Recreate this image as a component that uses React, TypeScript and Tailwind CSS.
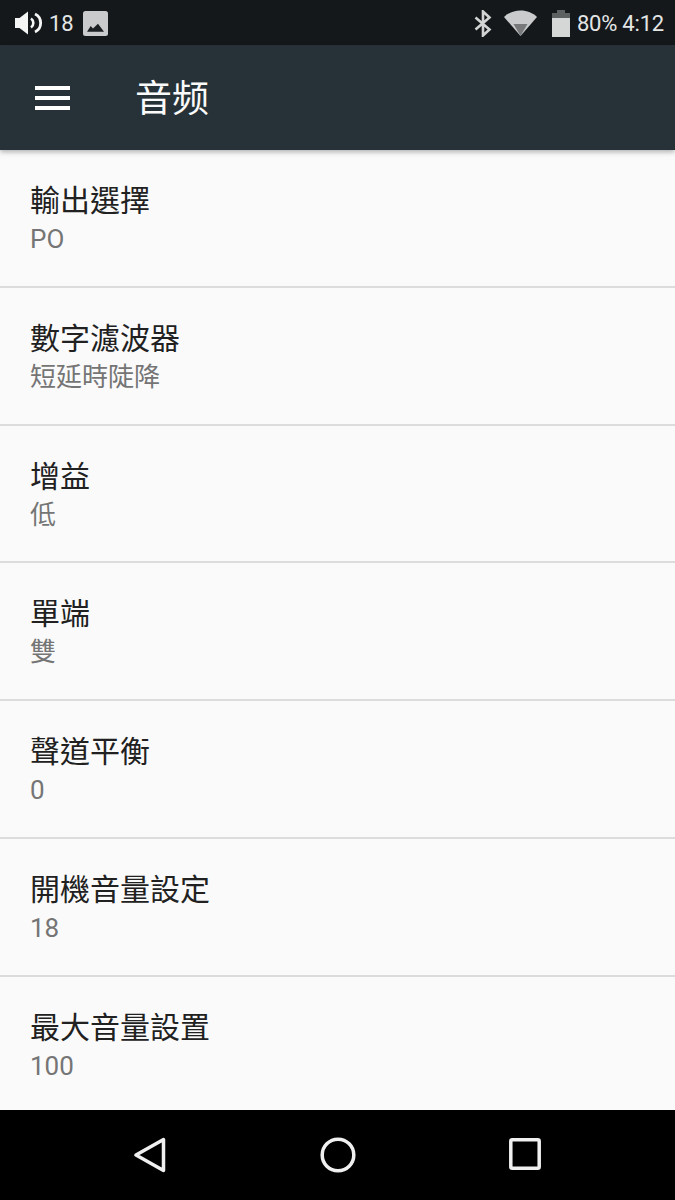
const rows = [
  { title: '輸出選擇', value: 'PO' },
  { title: '數字濾波器', value: '短延時陡降' },
  { title: '增益', value: '低' },
  { title: '單端', value: '雙' },
  { title: '聲道平衡', value: '0' },
  { title: '開機音量設定', value: '18' },
  { title: '最大音量設置', value: '100' },
];

function StatusBar() {
  return (
    <div className="flex h-[45px] items-center justify-between bg-[#14181b] pl-[15px] pr-[11px] text-[#e4e6e6]">
      <div className="flex items-center">
        <svg width="28" height="24" viewBox="0 0 28 24" fill="none">
          <path d="M0 7h4.500L13 .5v23L4.500 17H0z" fill="#f4f5f5" />
          <path d="M16 7.500a5.500 5.500 0 0 1 0 9" stroke="#f4f5f5" strokeWidth="2.600" />
          <path d="M20 3a10 10 0 0 1 0 18" stroke="#f4f5f5" strokeWidth="2.800" />
        </svg>
        <span className="ml-[6px] mt-[2px] text-[22px] leading-none">18</span>
        <svg className="ml-[9px] mt-[1px]" width="25" height="25" viewBox="0 0 25 25">
          <rect width="25" height="25" rx="2.500" fill="#c9cbcc" />
          <path d="M4 20.700l3.700-5.700 2.300 2.500 5-4.800 6 8z" fill="#1c2022" />
        </svg>
      </div>
      <div className="flex items-center">
        <svg className="mt-[1px]" width="18" height="27" viewBox="0 0 18 27" fill="none">
          <path d="M1.500 7.500l14 12-6.500 6V1.500l6.500 6-14 12" stroke="#d2d4d4" strokeWidth="2.600" />
        </svg>
        <svg className="ml-[12px] mt-[1px]" width="33" height="26" viewBox="0 0 33 26">
          <path d="M0 7C4 3 10 .5 16.500.5S29 3 33 7L16.500 26z" fill="#c9cbcc" />
          <path d="M9.500 14h14l-7 12z" fill="#77797a" />
        </svg>
        <svg className="ml-[15px] mt-[1px]" width="18" height="27" viewBox="0 0 18 27">
          <path d="M5 0h8v3h5v5H0V3h5z" fill="#5e6162" />
          <rect y="8" width="18" height="19" fill="#d5d7d7" />
        </svg>
        <span className="ml-[7px] mt-[2px] text-[22px] leading-none tracking-[-0.2px]">80% 4:12</span>
      </div>
    </div>
  );
}

function AppBar() {
  return (
    <div className="relative z-10 flex h-[105px] items-center bg-[#263238] pl-[35px] shadow-[0_2px_5px_rgba(0,0,0,0.3)]">
      <div className="flex w-[35px] flex-col gap-[6px]">
        <div className="h-[4px] bg-white" />
        <div className="h-[4px] bg-white" />
        <div className="h-[4px] bg-white" />
      </div>
      <h1 className="ml-[65px] mt-[3px] text-[37px] leading-none text-[#fafafa]">音频</h1>
    </div>
  );
}

function SettingRow({ title, value, last }: { title: string; value: string; last?: boolean }) {
  return (
    <div className={`h-[137.8px] pl-[30px] pt-[33px] ${last ? '' : 'border-b-2 border-[#dcdcdc]'}`}>
      <div className="text-[30px] leading-[36px] text-[#212121]">{title}</div>
      <div className="mt-[2px] text-[26px] leading-[36px] text-[#757575]">{value}</div>
    </div>
  );
}

function NavBar() {
  return (
    <div className="flex h-[90px] items-start bg-black pt-[27px]">
      <svg className="ml-[134px]" width="32" height="36" viewBox="0 0 32 36" fill="none">
        <path d="M29.500 2.500v31L2 18z" stroke="#f0f0f0" strokeWidth="3.500" strokeLinejoin="round" />
      </svg>
      <svg className="ml-[154px]" width="36" height="36" viewBox="0 0 36 36" fill="none">
        <circle cx="18" cy="18" r="15.800" stroke="#f0f0f0" strokeWidth="3.500" />
      </svg>
      <svg className="ml-[153px] mt-[1px]" width="32" height="32" viewBox="0 0 32 32" fill="none">
        <rect x="1.800" y="1.800" width="28.400" height="28.400" rx="1.500" stroke="#f0f0f0" strokeWidth="3.500" />
      </svg>
    </div>
  );
}

export default function App() {
  return (
    <div className="flex h-[1200px] w-[675px] flex-col overflow-hidden bg-[#fafafa] font-['Roboto','Noto_Sans_CJK_TC',sans-serif]">
      <StatusBar />
      <AppBar />
      <div className="h-[960px] overflow-hidden">
        {rows.map((r, i) => (
          <SettingRow key={r.title} title={r.title} value={r.value} last={i === rows.length - 1} />
        ))}
      </div>
      <NavBar />
    </div>
  );
}
